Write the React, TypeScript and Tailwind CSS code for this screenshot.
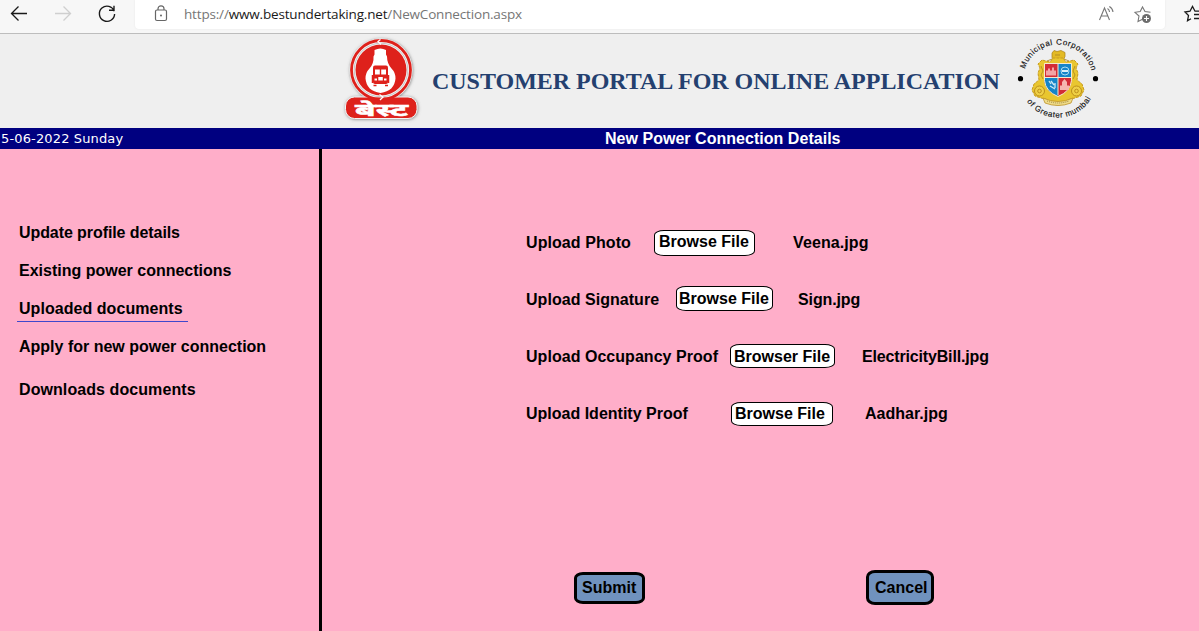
import React from "react";

const menuItems = [
  { label: "Update profile details", box: "h-[38px]", text: "tracking-[-0.08px]", active: false },
  { label: "Existing power connections", box: "h-[38px]", text: "", active: false },
  { label: "Uploaded documents", box: "h-[38px]", text: "tracking-[0.05px]", active: true },
  { label: "Apply for new power connection", box: "h-[43px]", text: "", active: false },
  { label: "Downloads documents", box: "h-[38px]", text: "tracking-[0.08px]", active: false },
];

const uploads = [
  { label: "Upload Photo", labelBox: "w-[128px] tracking-[0.08px]", button: "Browse File", buttonBox: "w-[101px] h-[26px] pl-1 pb-[2px] mt-px leading-[22px]", file: "Veena.jpg", fileBox: "ml-[38px] tracking-[0.1px]" },
  { label: "Upload Signature", labelBox: "w-[150px] tracking-[0.04px]", button: "Browse File", buttonBox: "w-[97px] h-[25px] pl-[2px] pt-px -mt-[2px] leading-[22px]", file: "Sign.jpg", fileBox: "ml-[25px] tracking-[-0.12px]" },
  { label: "Upload Occupancy Proof", labelBox: "w-[204px] tracking-[0.04px]", button: "Browser File", buttonBox: "w-[105px] h-[24px] pl-[3px] pt-[2px] -mt-px leading-[20px]", file: "ElectricityBill.jpg", fileBox: "ml-[27px] tracking-[-0.16px]" },
  { label: "Upload Identity Proof", labelBox: "w-[205px]", button: "Browse File", buttonBox: "w-[102px] h-[24px] pl-[3px] leading-[21px]", file: "Aadhar.jpg", fileBox: "ml-[32px]" },
];

function BrowserBar() {
  return (
    <div className="flex h-[34px] shrink-0 border-b border-[#bdbdbd] bg-[#f7f7f7]">
      <svg className="h-[33px] w-[135px] shrink-0" viewBox="0 0 135 33" fill="none" strokeWidth="1.3">
        <path d="M27 13.5H11.5M18.5 6.5l-7 7 7 7" stroke="#1a1a1a" />
        <path d="M55 13.5h15.5M63.500 6.500l7 7-7 7" stroke="#cfcfcf" />
        <path d="M114.200 11.300A7.600 7.600 0 1 0 114.600 14M109 10.200h5V5.800" stroke="#1a1a1a" strokeWidth="1.400" />
      </svg>
      <div className="flex h-[29px] w-[1030px] items-center rounded-b-[4px] bg-white shadow-[0_0_2px_#e4e4e4]">
        <svg className="ml-[19px] h-[29px] w-[16px]" viewBox="154 0 16 29" fill="none" stroke="#666" strokeWidth="1.200">
          <rect x="155.500" y="10" width="11" height="10.500" rx="1.500" />
          <path d="M158 10V8.800a3 3 0 0 1 6 0V10" />
          <circle cx="161" cy="15.500" r=".9" fill="#555" stroke="none" />
        </svg>
        <div className="ml-[14px] w-[900px] font-['Open_Sans',sans-serif] text-[13.500px] leading-[29px] tracking-[-0.17px] text-[#767676]">
          https://<span className="text-[#1a1a1a]">www.bestundertaking.net</span>/NewConnection.aspx
        </div>
        <svg className="h-[29px] w-[70px]" viewBox="1084 0 70 29" fill="none" stroke="#777" strokeWidth="1.100">
          <path d="M1099.500 20l5-12 5 12M1101.300 16h6.500M1107.500 8.500a4 4 0 0 1 2 3.500M1109.300 6.500a7 7 0 0 1 3.700 5.500" />
          <path d="M1143 19l-5 2.500 1-5.500-4-3.700 5.200-.7L1142.500 7l2.500 4.600 5.500.7" />
          <circle cx="1146.500" cy="18.500" r="4.500" fill="#6d6d6d" stroke="none" />
          <path d="M1144 18.500h5M1146.500 16v5" stroke="#fff" />
        </svg>
      </div>
      <svg className="h-[33px] w-[34px]" viewBox="1165 0 34 33" fill="none" stroke="#1a1a1a" strokeWidth="1.300">
        <path d="M1191 18.800l-3.500 2 1-5.300-3.500-3.500 5-.8 2.500-4.700 2.500 4.700h4M1194 14.500h7M1194 18.500h7" />
      </svg>
    </div>
  );
}

function BestLogo() {
  return (
    <svg className="h-[94px] w-[95px]" viewBox="335 34 95 94" fill="none">
      <defs>
        <filter id="logoShadow" x="-20%" y="-20%" width="140%" height="140%">
          <feDropShadow dx="0.500" dy="0.500" stdDeviation="1.500" floodColor="#777" floodOpacity=".9" />
        </filter>
      </defs>
      <g filter="url(#logoShadow)">
        <circle cx="381" cy="70" r="31.500" fill="#f4f4f4" />
        <rect x="345.500" y="97" width="71.500" height="21.500" rx="9" fill="#de211b" stroke="#f4f4f4" />
      </g>
      <circle cx="381" cy="70" r="29.500" stroke="#de211b" strokeWidth="2.800" />
      <circle cx="381" cy="70" r="25.500" fill="#de211b" />
      <circle cx="381" cy="70" r="26.800" stroke="#aaa" strokeWidth=".6" />
      <path d="M380.500 39.500l-2.500 2 3 3M379.500 94.500l3.500 2.500-3 3" stroke="#fff" strokeWidth="1.300" />
      <path d="M374.500 50q6-3 11.500 0v4.500l1 2q0 7 4.500 12 4 4 4 10-1 12.500-15 14.500-14-2-15-14.500 0-6 4-10 4.500-5 4-12l1-2z" fill="#fff" />
      <rect x="373" y="65.500" width="15" height="18.500" rx="2" fill="#de211b" />
      <path d="M375 69.500h4.800v5H375zM381.200 69.500h4.800v5h-4.800zM374.500 78.500h2.500v2h-2.500zM384 78.500h2.500v2H384zM378.300 77h4.500v3.500h-4.500z" fill="#fff" />
      <path d="M373.500 85.500h3M385 85.500h3M372.500 75v8M388.500 75v8" stroke="#de211b" strokeWidth="1.500" />
      <text x="355" y="115.500" textLength="53" lengthAdjust="spacingAndGlyphs" className="fill-white stroke-white font-['Noto_Sans','Noto_Sans_Devanagari',sans-serif] text-[18px] font-bold" strokeWidth=".5">बेस्ट</text>
    </svg>
  );
}

function CorporationLogo() {
  return (
    <svg className="h-[94px] w-[95px] shrink-0" viewBox="1010 34 95 94" fill="none">
      <defs>
        <path id="arcTop" d="M1023.500 79A34.500 34.500 0 0 1 1092.500 79" />
        <path id="arcBottom" d="M1019.500 79A38.500 38.500 0 0 0 1096.500 79" />
      </defs>
      <g className="fill-[#111] stroke-[#111] font-['Liberation_Sans',sans-serif] text-[8px]" strokeWidth=".15">
        <text textLength="90" lengthAdjust="spacing"><textPath href="#arcTop" startOffset="10">Municipal Corporation</textPath></text>
        <text textLength="76" lengthAdjust="spacing"><textPath href="#arcBottom" startOffset="24">of Greater mumbai</textPath></text>
      </g>
      <circle cx="1020.500" cy="78.700" r="2.600" fill="#000" />
      <circle cx="1095.500" cy="78.700" r="2.600" fill="#000" />
      <path d="M1052 53l2-2.500 3 1 4-1 4 2v4l-2 4h-9l-2-3z" fill="#e3ba24" stroke="#a87e17" strokeWidth=".7" />
      <path d="M1042 60l-4 4 2 4-2 5 1 7-5 4-2 6 3 6 6 2 5 1 5 5 7 1 7-1 5-5 5-1 6-2 3-6-2-6-5-4 1-7-2-5 2-4-4-4-8 2-3-4h-10l-3 4z" fill="#e9c62f" stroke="#c89b20" strokeWidth="1" strokeDasharray="3 1" />
      <path d="M1044.500 64h27v16q0 11-13.500 16-13.500-5-13.500-16z" fill="#d32d37" />
      <path d="M1058 64h13.500v14H1058zM1044.500 78h13.500v18q-13.500-5-13.500-16z" fill="#1685c9" />
      <path d="M1044.500 77.500h27M1058 64v31M1044.500 63.500h27v17q-1 11-13.500 16-12.500-5-13.500-16z" stroke="#f4ead0" />
      <path d="M1046 75.500v-5h2v-2h2v2h2v-3h2v3h2v5z" fill="#f3a4a5" />
      <circle cx="1065" cy="71" r="4" stroke="#a6dbf1" />
      <path d="M1062 70h6v2h-6z" fill="#d8effa" />
      <path d="M1049 81l2 3m0-3l3 4m-4 1l5 3m0-6v5" stroke="#cce9f5" strokeWidth="1.300" />
      <path d="M1060 90v-4.500h2V82l2.500-3 2.500 3v3.500h2V90z" fill="#f5b7b0" />
      <g fill="#efd046" stroke="#bd8f1d">
        <circle cx="1039.500" cy="91" r="5" />
        <circle cx="1076.500" cy="91" r="5" />
        <circle cx="1039.500" cy="91" r="1.800" />
        <circle cx="1076.500" cy="91" r="1.800" />
      </g>
      <path d="M1041 66l2 5-2 4 2 4M1075 66l-2 5 2 4-2 4M1047 61l5-2M1069 61l-5-2M1055 55h5" stroke="#a98420" strokeWidth=".8" />
      <path d="M1043 98q15 7 30 0l-2 5q-13 5-26 0z" fill="#f0dc8a" stroke="#bc932a" strokeWidth=".8" />
      <path d="M1047 101q11 4 22 0" stroke="#98823f" strokeDasharray="1 1" />
    </svg>
  );
}

export default function App() {
  return (
    <div className="flex h-[631px] w-[1199px] flex-col overflow-hidden bg-[#ffaec9] font-['Liberation_Sans',Arial,sans-serif] text-[16px] font-bold leading-[18px] text-black">
      <div className="font-normal"><BrowserBar /></div>
      <header className="flex h-[94px] shrink-0 bg-[#efefef] pl-[335px] font-normal">
        <BestLogo />
        <h1 className="w-[580px] shrink-0 whitespace-nowrap pl-[2px] pt-[32px] font-['Liberation_Serif',serif] text-[24px] font-bold leading-[30px] tracking-[-0.02px] text-[#24406f]">
          CUSTOMER PORTAL FOR ONLINE APPLICATION
        </h1>
        <CorporationLogo />
      </header>
      <div className="flex h-[21px] shrink-0 bg-[#000080] text-white">
        <span className="w-[605px] pl-px font-['DejaVu_Sans',sans-serif] text-[13px] font-normal leading-[21px] tracking-[0.14px]">5-06-2022 Sunday</span>
        <span className="leading-[21px] tracking-[0.03px]">New Power Connection Details</span>
      </div>
      <div className="flex min-h-0 flex-1">
        <nav className="w-[322px] shrink-0 border-r-[3px] border-black pl-[17px] pt-[75px]">
          {menuItems.map((item) => (
            <div key={item.label} className={`${item.box} ${item.text}`}>
              <a className={item.active ? "block h-[22px] w-[171px] border-b border-[#3f48cc] pl-[2px]" : "block pl-[2px]"}>{item.label}</a>
            </div>
          ))}
        </nav>
        <main className="flex-1 pt-[65px]">
          {uploads.map((row) => (
            <div key={row.label} className="flex h-[57px] items-center whitespace-nowrap pl-[204px]">
              <span className={row.labelBox}>{row.label}</span>
              <button className={`shrink-0 rounded-[10px/5px] border border-black bg-white text-left ${row.buttonBox}`}>{row.button}</button>
              <span className={row.fileBox}>{row.file}</span>
            </div>
          ))}
          <div className="mt-[128px] flex items-center pl-[252px]">
            <button className="h-[32px] w-[71px] rounded-[9px/6px] border-[3px] border-black bg-[#7092be] pl-[5px] text-left leading-[26px]">Submit</button>
            <button className="ml-[221px] h-[35px] w-[68px] rounded-[9px/7px] border-[3px] border-black bg-[#7092be] pl-[6px] text-left leading-[28px]">Cancel</button>
          </div>
        </main>
      </div>
    </div>
  );
}
